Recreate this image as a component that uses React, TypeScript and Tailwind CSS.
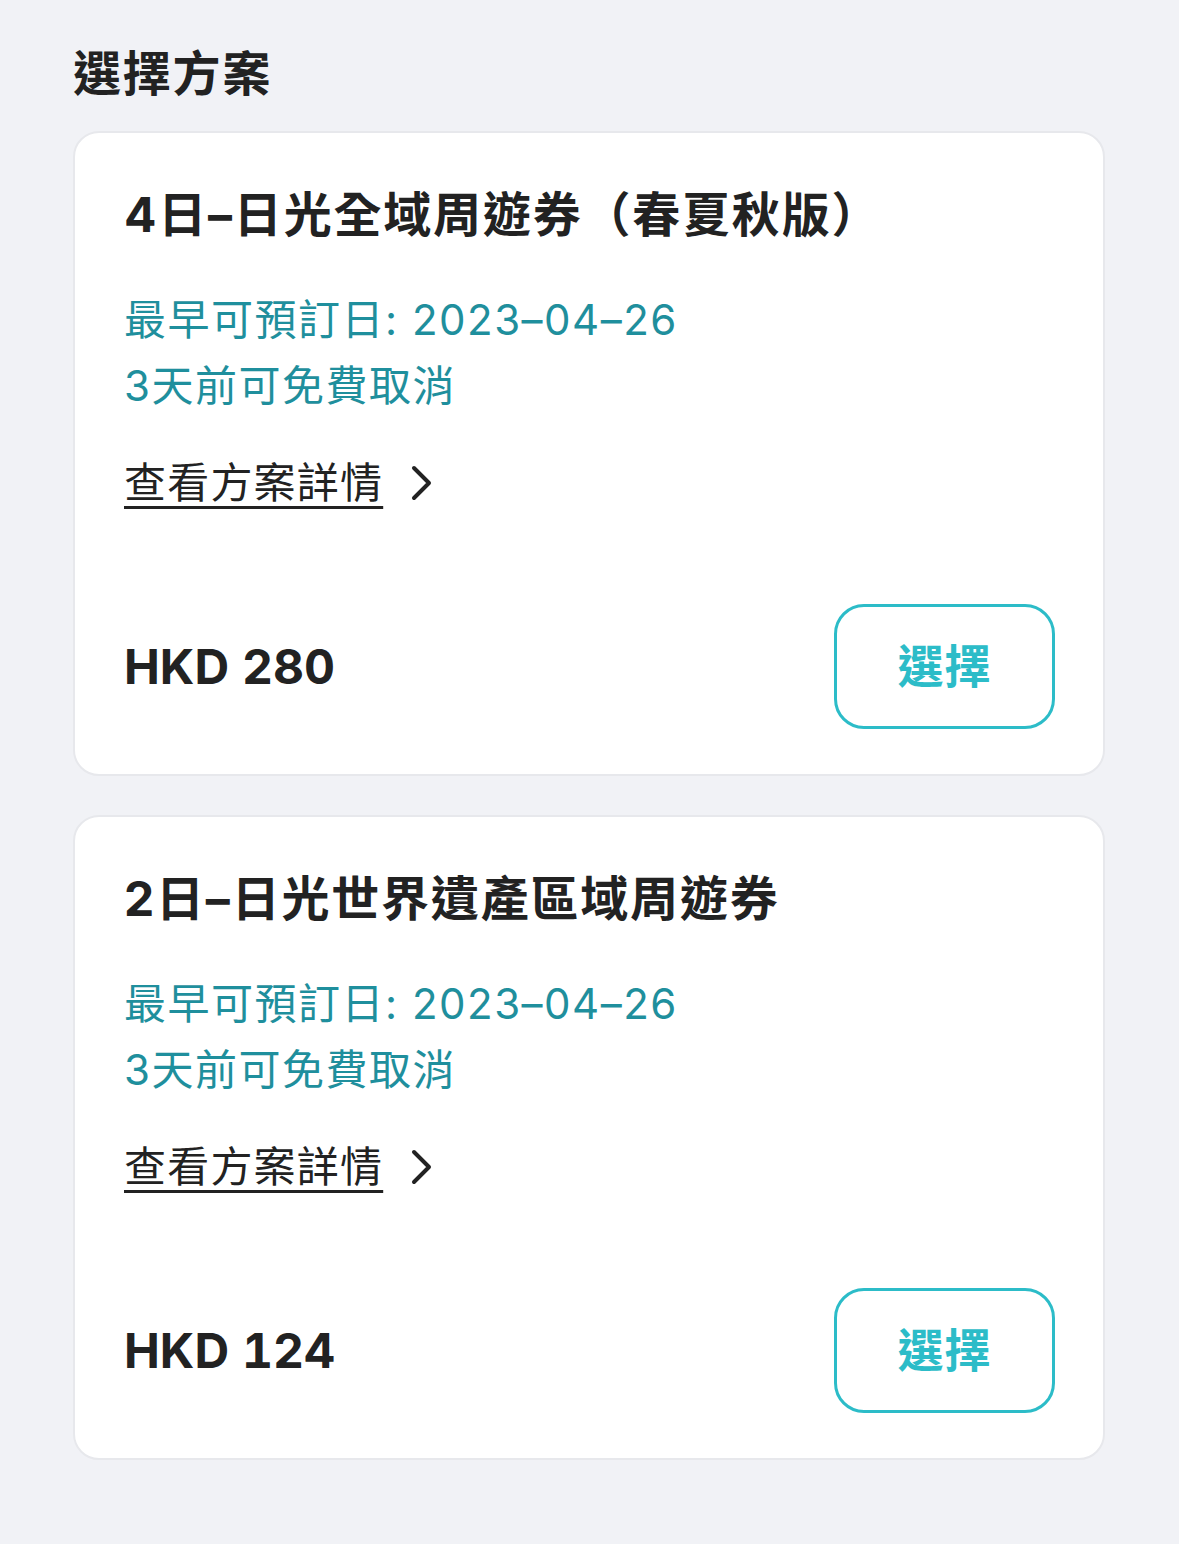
import React from "react";

const plans = [
  { id: 1, name: "4日–日光全域周遊券（春夏秋版）", date: "2023–04–26", price: "HKD 280" },
  { id: 2, name: "2日–日光世界遺產區域周遊券", date: "2023–04–26", price: "HKD 124" },
];

function PlanCard({ plan }: { plan: (typeof plans)[number] }) {
  return (
    <div className="bg-white border-2 border-[#e7e8ec] rounded-[26px] pt-[48px] pb-[45px] pl-[49px] pr-[48px]">
      <h3 className="text-[48px] leading-[67px] font-bold text-[#222222] tracking-[1.8px]">{plan.name}</h3>
      <div className="mt-[39px] text-[42px] leading-[66px] text-[#1f8f9d] tracking-[1.5px]">
        <p>最早可預訂日: {plan.date}</p>
        <p>3天前可免費取消</p>
      </div>
      <a href="#" className="mt-[31px] flex items-center gap-[26px] text-[42px] leading-[66px] text-[#222222]">
        <span className="underline decoration-[3px] underline-offset-[8px] tracking-[1.2px]">查看方案詳情</span>
        <svg width="26" height="36" viewBox="0 0 26 36" fill="none">
          <path d="M5 3 L20 18 L5 33" stroke="#222222" strokeWidth="4" strokeLinecap="round" strokeLinejoin="round" />
        </svg>
      </a>
      <div className="mt-[88px] flex items-center justify-between">
        <span className="text-[48px] font-bold text-[#222222] tabular-nums">{plan.price}</span>
        <button className="w-[221px] h-[125px] border-[3px] border-[#2cbcc8] rounded-[30px] text-[46px] font-bold text-[#2cbcc8] tracking-[1px]">
          選擇
        </button>
      </div>
    </div>
  );
}

export default function App() {
  return (
    <div
      className="min-h-[1544px] bg-[#f1f2f6] pt-[40px] pb-[84px] pl-[73px] pr-[74px]"
      style={{ fontFamily: 'Inter, "Noto Sans CJK TC", sans-serif' }}
    >
      <h2 className="text-[48px] leading-[67px] font-bold text-[#222222] tracking-[1.8px]">選擇方案</h2>
      <div className="mt-[24px] flex flex-col gap-[39px]">
        {plans.map((p) => (
          <PlanCard key={p.id} plan={p} />
        ))}
      </div>
    </div>
  );
}
